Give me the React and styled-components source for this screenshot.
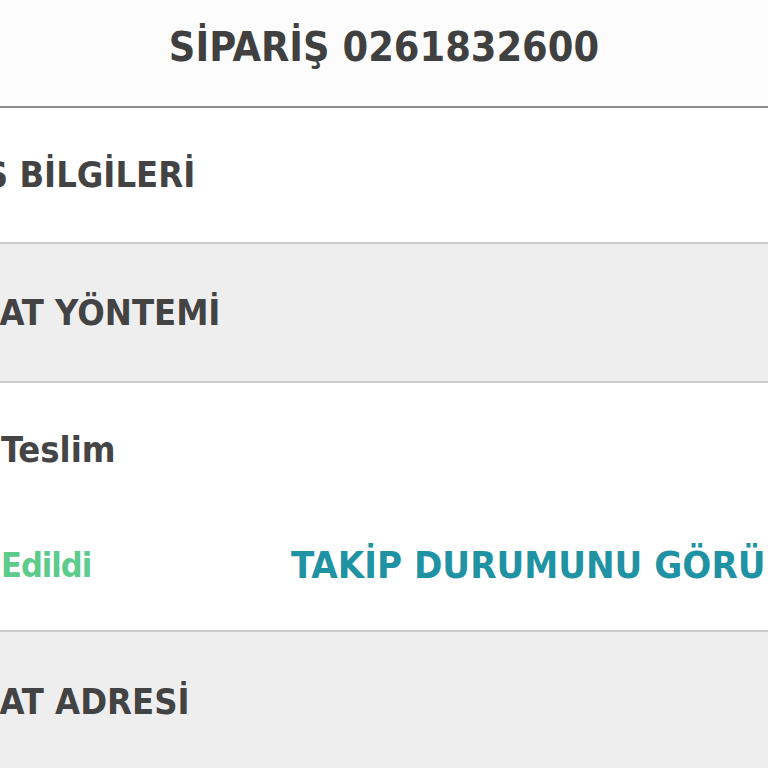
import React from "react";
import styled, { createGlobalStyle } from "styled-components";

const GlobalStyle = createGlobalStyle`
  html, body {
    margin: 0;
    padding: 0;
    background: #ffffff;
  }
  body {
    font-family: "DejaVu Sans Condensed", "DejaVu Sans", sans-serif;
    font-stretch: condensed;
    overflow: hidden;
  }
`;

const Screen = styled.div`
  width: 768px;
  height: 768px;
  overflow: hidden;
  background: #eeeeee;
`;

// the app is shown zoomed in, so its frame runs past both edges of the screen
const Frame = styled.div`
  width: 1034px;
  margin-left: -133px;
  display: flex;
  flex-direction: column;
`;

const Header = styled.header`
  height: 108px;
  box-sizing: border-box;
  padding-bottom: 12px;
  display: flex;
  align-items: center;
  justify-content: center;
  background: #fcfcfc;
  border-bottom: 2px solid #8e8e8e;
`;

const OrderTitle = styled.h1`
  margin: 0;
  font-size: 41px;
  font-weight: 700;
  line-height: 1;
  color: #404040;
`;

const Section = styled.section`
  height: ${(p) => p.$height}px;
  display: flex;
  align-items: center;
  background: ${(p) => (p.$muted ? "#eeeeee" : "#ffffff")};
  border-bottom: ${(p) => (p.$last ? "none" : "2px solid #cacaca")};
`;

const SectionTitle = styled.h2`
  margin: 0;
  font-size: 36px;
  font-weight: 700;
  line-height: 1;
  color: #434343;
`;

const StatusSection = styled.section`
  height: 249px;
  box-sizing: border-box;
  padding: 49px 0 0 134px;
  display: flex;
  flex-direction: column;
  gap: 79px;
  background: #ffffff;
  border-bottom: 2px solid #cacaca;
`;

const StatusLabel = styled.div`
  font-size: 36px;
  font-weight: 700;
  line-height: 36px;
  color: #454545;
`;

const StatusRow = styled.div`
  display: grid;
  grid-template-columns: 290px auto;
  align-items: center;
`;

const StatusValue = styled.span`
  font-size: 34px;
  font-weight: 700;
  letter-spacing: -1px;
  line-height: 36px;
  color: #5ccb8c;
`;

const TrackLink = styled.a`
  font-size: 38px;
  font-weight: 700;
  line-height: 36px;
  color: #1f93a3;
  text-decoration: none;
  white-space: nowrap;
`;

export default function App() {
  return (
    <Screen>
      <GlobalStyle />
      <Frame>
        <Header>
          <OrderTitle>SİPARİŞ 0261832600</OrderTitle>
        </Header>
        <Section $height={134}>
          <SectionTitle>SİPARİŞ BİLGİLERİ</SectionTitle>
        </Section>
        <Section $height={137} $muted>
          <SectionTitle>TESLİMAT YÖNTEMİ</SectionTitle>
        </Section>
        <StatusSection>
          <StatusLabel>Teslim</StatusLabel>
          <StatusRow>
            <StatusValue>Edildi</StatusValue>
            <TrackLink href="#takip">TAKİP DURUMUNU GÖRÜNTÜLE</TrackLink>
          </StatusRow>
        </StatusSection>
        <Section $height={140} $muted $last>
          <SectionTitle>TESLİMAT ADRESİ</SectionTitle>
        </Section>
      </Frame>
    </Screen>
  );
}
